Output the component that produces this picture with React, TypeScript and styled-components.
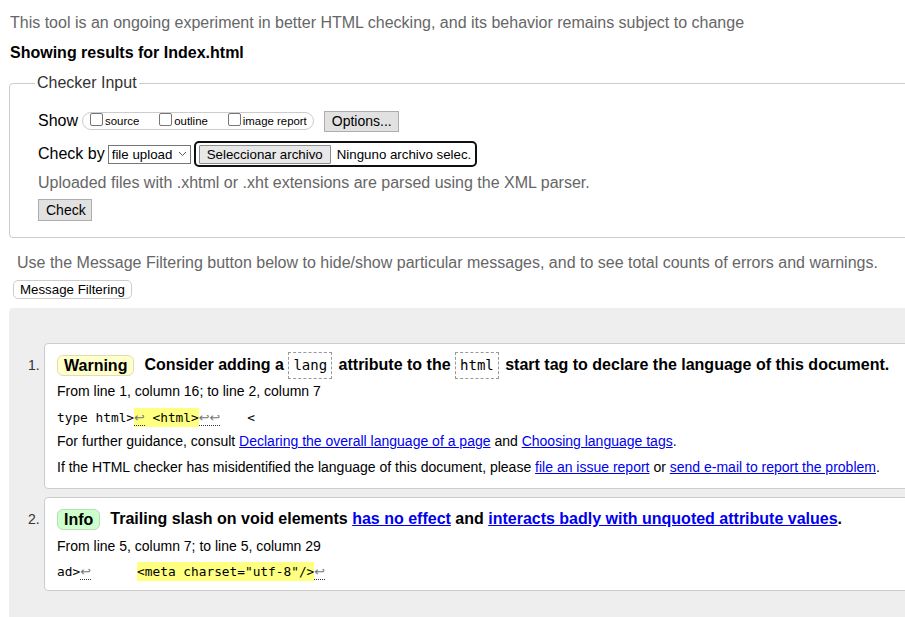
import React from 'react';
import styled, { createGlobalStyle } from 'styled-components';

const GlobalStyle = createGlobalStyle`
  html, body {
    margin: 0;
    padding: 0;
    overflow: hidden;
    background: #fff;
  }
  body {
    font-family: "Liberation Sans", Arial, sans-serif;
    color: #000;
  }
`;

const Page = styled.div`
  width: 1000px;
  padding-left: 9px;
`;

const Intro = styled.p<{ $top: number; $indent: number }>`
  margin: ${(p) => p.$top}px 0 0 ${(p) => p.$indent}px;
  font-size: 16px;
  line-height: 18px;
  color: #666;
`;

const Heading = styled.h2`
  margin: 12px 0 0 1px;
  font-size: 16px;
  line-height: 18px;
  font-weight: bold;
`;

const Fieldset = styled.fieldset`
  margin: 12px 0 0;
  padding: 16px 0 16px 28px;
  border: 1px solid #ccc;
  border-radius: 4px;
  min-width: 0;
`;

const Legend = styled.legend`
  padding: 0 2px;
  margin-left: -3px;
  font-size: 16px;
  line-height: 18px;
  color: #333;
`;

const Row = styled.div<{ $gap?: number }>`
  display: flex;
  align-items: center;
  height: 26px;
  margin-top: ${(p) => p.$gap ?? 0}px;
  font-size: 16px;
  gap: 3px;
`;

const ShowGroup = styled.div`
  display: flex;
  align-items: center;
  height: 16px;
  margin-left: 1px;
  padding: 0 6px 0 7px;
  border: 1px solid #ccc;
  border-radius: 9px;
  gap: 20px;
`;

const Check = styled.label`
  display: flex;
  align-items: center;
  font-size: 11.4px;
  color: #000;
`;

const Box = styled.input`
  appearance: none;
  width: 13px;
  height: 13px;
  margin: 0 2px 3px 0;
  border: 1px solid #767676;
  border-radius: 2px;
  background: #fff;
`;

const Button = styled.button`
  height: 21px;
  padding: 0 7px;
  font-family: "Liberation Sans", Arial, sans-serif;
  font-size: 14px;
  color: #000;
  background: #e1e1e1;
  border: 1px solid #adadad;
  border-radius: 0;
`;

const OptionsButton = styled(Button)`
  margin-left: 7px;
  width: 75px;
`;

const SelectWrap = styled.div`
  position: relative;
  display: flex;
`;

const Select = styled.select`
  appearance: none;
  height: 19px;
  width: 83px;
  padding: 0 0 0 3px;
  font-family: "Liberation Sans", Arial, sans-serif;
  font-size: 13.3px;
  color: #000;
  background: #fff;
  border: 1px solid #767676;
  border-radius: 0;
`;

const Chevron = styled.svg`
  position: absolute;
  right: 4px;
  top: 6px;
  pointer-events: none;
`;

const FileBox = styled.div`
  display: flex;
  align-items: center;
  height: 22px;
  padding: 0 4px 0 3px;
  border: 2px solid #101010;
  border-radius: 5px;
  gap: 6px;
  font-size: 13.3px;
`;

const FileButton = styled.button`
  height: 19px;
  padding: 0 7px;
  font-family: "Liberation Sans", Arial, sans-serif;
  font-size: 13.3px;
  color: #000;
  background: #e8e8e8;
  border: 1px solid #8d8d8d;
  border-radius: 1px;
`;

const Hint = styled.div`
  margin-top: 7px;
  font-size: 16px;
  line-height: 18px;
  color: #666;
`;

const CheckButton = styled(Button)`
  display: block;
  margin-top: 7px;
  height: 22px;
  width: 54px;
`;

const FilterButton = styled.button`
  display: block;
  margin: 8px 0 0 4px;
  height: 19px;
  padding: 0 6px;
  font-family: "Liberation Sans", Arial, sans-serif;
  font-size: 13.3px;
  color: #000;
  background: #fff;
  border: 1px solid #ccc;
  border-radius: 5px;
`;

const Results = styled.ol`
  margin: 9px 0 0;
  padding: 35px 0 40px;
  list-style: none;
  background: #eee;
  border-top-left-radius: 4px;
  display: flex;
  flex-direction: column;
  gap: 8px;
`;

const Item = styled.li`
  display: flex;
  align-items: flex-start;
`;

const Num = styled.span`
  width: 35px;
  flex: none;
  padding: 14px 0 0 19px;
  box-sizing: border-box;
  font-size: 14px;
  color: #333;
`;

const Card = styled.div<{ $bottom: number }>`
  flex: 1;
  padding: 7px 0 ${(p) => p.$bottom}px 12px;
  background: #fff;
  border: 1px solid #ccc;
  border-radius: 4px;
`;

const Title = styled.p`
  margin: 0;
  display: flex;
  align-items: center;
  height: 28px;
  font-size: 16px;
  font-weight: bold;
  white-space: pre;
`;

const Badge = styled.span<{ $kind: 'warning' | 'info' }>`
  display: inline-block;
  margin-right: 10px;
  padding: 0 6px;
  line-height: 19px;
  border: 1px solid ${(p) => (p.$kind === 'warning' ? '#e2dcb0' : '#b9dcb9')};
  border-radius: 6px;
  background: ${(p) => (p.$kind === 'warning' ? '#ffffcc' : '#ccffcc')};
`;

const Code = styled.code`
  display: inline-block;
  margin: 0 2px 0 0;
  padding: 0 4px;
  line-height: 25px;
  font-family: "DejaVu Sans Mono", "Liberation Mono", monospace;
  font-size: 14px;
  font-weight: normal;
  border: 1px dashed #999;
`;

const Line = styled.p<{ $gap: number }>`
  margin: ${(p) => p.$gap}px 0 0 0;
  font-size: 14px;
  line-height: 18px;
`;

const Extract = styled.p<{ $gap: number }>`
  margin: ${(p) => p.$gap}px 0 0 0;
  font-family: "DejaVu Sans Mono", "Liberation Mono", monospace;
  font-size: 12.8px;
  line-height: 20px;
  white-space: pre;
`;

const Mark = styled.mark`
  background: #ffff80;
  color: #000;
  padding: 2px 0;
`;

const Ret = styled.span`
  font-family: "DejaVu Sans", sans-serif;
  color: #777;
  border-bottom: 1px dotted #333;
`;

const Tail = styled.span`
  margin-left: 4px;
`;

const Link = styled.a`
  color: #00e;
  text-decoration: underline;
`;

const App: React.FC = () => {
  return (
    <>
      <GlobalStyle />
      <Page>
        <Intro $top={14} $indent={1}>
          This tool is an ongoing experiment in better HTML checking, and its behavior remains subject to change
        </Intro>
        <Heading>Showing results for Index.html</Heading>

        <Fieldset>
          <Legend>Checker Input</Legend>
          <Row>
            Show
            <ShowGroup>
              <Check><Box type="checkbox" />source</Check>
              <Check><Box type="checkbox" />outline</Check>
              <Check><Box type="checkbox" />image report</Check>
            </ShowGroup>
            <OptionsButton>Options...</OptionsButton>
          </Row>
          <Row $gap={7}>
            Check by
            <SelectWrap>
              <Select defaultValue="file">
                <option value="file">file upload</option>
              </Select>
              <Chevron width="9" height="6" viewBox="0 0 9 6">
                <path d="M1 1l3.5 3.5L8 1" fill="none" stroke="#555" strokeWidth="1" />
              </Chevron>
            </SelectWrap>
            <FileBox>
              <FileButton>Seleccionar archivo</FileButton>
              <span>Ninguno archivo selec.</span>
            </FileBox>
          </Row>
          <Hint>Uploaded files with .xhtml or .xht extensions are parsed using the XML parser.</Hint>
          <CheckButton>Check</CheckButton>
        </Fieldset>

        <Intro $top={16} $indent={8}>
          Use the Message Filtering button below to hide/show particular messages, and to see total counts of errors and warnings.
        </Intro>
        <FilterButton>Message Filtering</FilterButton>

        <Results>
          <Item>
            <Num>1.</Num>
            <Card $bottom={12}>
              <Title>
                <Badge $kind="warning">Warning</Badge>
                Consider adding a <Code>lang</Code> attribute to the <Code>html</Code> start tag to declare the language of this document.
              </Title>
              <Line $gap={3}>From line 1, column 16; to line 2, column 7</Line>
              <Extract $gap={8}>
                type html&gt;<Mark><Ret>↩</Ret> &lt;html&gt;</Mark><Ret>↩↩</Ret>   <Tail>&lt;</Tail>
              </Extract>
              <Line $gap={4}>
                For further guidance, consult <Link href="#">Declaring the overall language of a page</Link> and{' '}
                <Link href="#">Choosing language tags</Link>.
              </Line>
              <Line $gap={8}>
                If the HTML checker has misidentified the language of this document, please{' '}
                <Link href="#">file an issue report</Link> or <Link href="#">send e-mail to report the problem</Link>.
              </Line>
            </Card>
          </Item>
          <Item>
            <Num>2.</Num>
            <Card $bottom={8}>
              <Title>
                <Badge $kind="info">Info</Badge>
                Trailing slash on void elements <Link href="#">has no effect</Link> and{' '}
                <Link href="#">interacts badly with unquoted attribute values</Link>.
              </Title>
              <Line $gap={4}>From line 5, column 7; to line 5, column 29</Line>
              <Extract $gap={7}>
                ad&gt;<Ret>↩</Ret>      <Mark>&lt;meta charset="utf-8"/&gt;</Mark><Ret>↩</Ret>
              </Extract>
            </Card>
          </Item>
        </Results>
      </Page>
    </>
  );
};

export default App;
